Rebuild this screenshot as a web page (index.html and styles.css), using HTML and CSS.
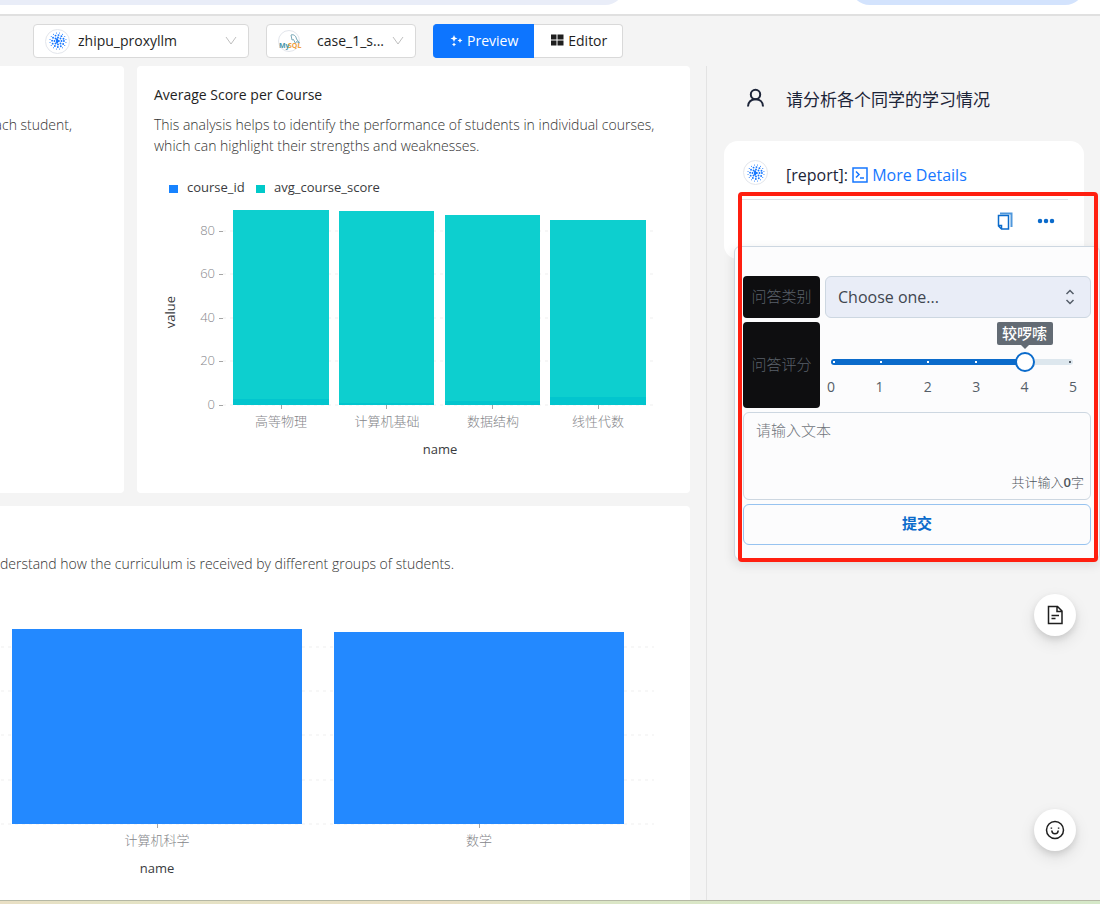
FILE: index.html
```html
<!DOCTYPE html>
<html lang="en">
<head>
<meta charset="utf-8">
<title>Report</title>
<link rel="stylesheet" href="styles.css">
</head>
<body>
<svg class="symbols" aria-hidden="true">
  <symbol id="dots" viewBox="0 0 20 20">
    <g fill="none" stroke="#1677ff" stroke-linecap="round">
      <path d="M9 8.200v3.600M10.800 10h.1" stroke-width="2.400"/>
      <circle cx="10" cy="10" r="3.900" stroke-width="2.100" pathLength="8" stroke-dasharray="0 1"/>
      <circle cx="10" cy="10" r="6.600" stroke-width="2.100" pathLength="12" stroke-dasharray="0 1"/>
      <circle cx="10" cy="10" r="9" stroke-width="1.200" pathLength="16" stroke-dasharray="0 1" stroke-dashoffset="0.500"/>
    </g>
  </symbol>
</svg>
<div class="tabs"><span class="tab tab-wide"></span><span class="tab tab-active"></span></div>
<main class="app">
  <header class="toolbar">
    <div class="picker picker-model">
      <span class="avatar"><svg width="18" height="18"><use href="#dots"/></svg></span>
      <select aria-label="Model"><option>zhipu_proxyllm</option></select>
      <svg class="chevron" viewBox="0 0 12 12"><path d="M1 2l5 7 5-7"/></svg>
    </div>
    <div class="picker picker-db">
      <span class="avatar avatar-db"><svg width="22" height="22" viewBox="0 0 22 22">
        <path d="M12 4c3-1 5 1 5.500 4l3 4-3-1.500-1 2-2-4-1.500.5z" fill="none" stroke="#79a9b8" stroke-width="1"/>
        <text x="0" y="17" class="logo-my">My</text><text x="9" y="17" class="logo-sql">SQL</text></svg></span>
      <select aria-label="Database"><option>case_1_s...</option></select>
      <svg class="chevron" viewBox="0 0 12 12"><path d="M1 2l5 7 5-7"/></svg>
    </div>
    <div class="modes">
      <button class="mode mode-on"><svg width="14" height="14" viewBox="0 0 14 14" fill="#fff"><path d="M5 2l1 2.500L8.500 5.500 6 6.500 5 9 4 6.500 1.500 5.500 4 4.500zM11 5l.8 1.700 1.700.8-1.700.8L11 10l-.8-1.700-1.700-.8 1.700-.8zM5 9.500l.7 1.300 1.300.7-1.300.7L5 13.500l-.7-1.300-1.300-.7 1.300-.7z"/></svg>Preview</button>
      <button class="mode"><svg width="14" height="14" viewBox="0 0 14 14" fill="#1f1f1f"><path d="M1 1.500h5.500v5H1zM7.500 1.500H13.500v5H7.500zM1 7.500h5.500v5H1zM7.500 7.500H13.500v5H7.500z"/></svg>Editor</button>
    </div>
  </header>
  <div class="columns">
    <section class="board">
      <article class="card card-cut"><p class="note note-end">ach student,</p></article>
      <article class="card card-score">
        <h2 class="title">Average Score per Course</h2>
        <p class="note">This analysis helps to identify the performance of students in individual courses, which can highlight their strengths and weaknesses.</p>
        <svg class="chart" viewBox="0 0 553 323" role="img" aria-label="Average score per course">
          <rect x="32" y="15" width="9" height="8" fill="#1783ff"/><text class="key" x="50" y="22">course_id</text>
          <rect x="119" y="15" width="9" height="8" fill="#00c9c9"/><text class="key" x="137" y="22">avg_course_score</text>
          <path class="grid" d="M86 61H519M86 104H519M86 148H519M86 191H519M86 235H519"/>
          <path class="tick" d="M82 61.500h4M82 104.500h4M82 148.500h4M82 191.500h4M82 235.500h4"/>
          <g fill="#0dcfcf"><rect x="96" y="40" width="96" height="195"/><rect x="202" y="41" width="95" height="194"/><rect x="308" y="45" width="95" height="190"/><rect x="413" y="50" width="96" height="185"/></g>
          <g fill="#02c5ce"><rect x="96" y="229" width="96" height="6"/><rect x="202" y="233" width="95" height="2"/><rect x="308" y="231" width="95" height="4"/><rect x="413" y="227" width="96" height="8"/></g>
          <path class="tick" d="M144.500 235v4M249.500 235v4M355.500 235v4M461.500 235v4"/>
          <g class="axis end"><text x="78" y="65">80</text><text x="78" y="108">60</text><text x="78" y="152">40</text><text x="78" y="195">20</text><text x="78" y="239">0</text></g>
          <g class="axis mid"><text x="144" y="256">高等物理</text><text x="250" y="256">计算机基础</text><text x="356" y="256">数据结构</text><text x="461" y="256">线性代数</text></g>
          <text class="key mid" x="303" y="284">name</text>
          <text class="key mid" transform="translate(38 142) rotate(-90)">value</text>
        </svg>
      </article>
      <article class="card card-major">
        <p class="note">derstand how the curriculum is received by different groups of students.</p>
        <svg class="chart" viewBox="0 0 690 320" role="img" aria-label="Score per major">
          <path class="grid" d="M1 67H654M1 111H654M1 155H654M1 200H654M1 244H654"/>
          <g fill="#2389ff"><rect x="12" y="49" width="290" height="195"/><rect x="334" y="52" width="290" height="192"/></g>
          <path class="tick" d="M157.500 244v4M479.500 244v4"/>
          <g class="axis mid"><text x="157" y="265">计算机科学</text><text x="479" y="265">数学</text></g>
          <text class="key mid" x="157" y="293">name</text>
        </svg>
      </article>
    </section>
    <aside class="chat">
      <div class="message question">
        <svg class="user" viewBox="0 0 20 20"><circle cx="10" cy="6.500" r="4.700"/><path d="M2.500 18.500c0-4.500 3-7.300 7.500-7.300s7.500 2.800 7.500 7.300"/></svg>
        <p>请分析各个同学的学习情况</p>
      </div>
      <div class="reply">
        <div class="message">
          <span class="avatar"><svg width="18" height="18"><use href="#dots"/></svg></span>
          <p>[report]: <a href="#details"><svg width="16" height="16" viewBox="0 0 16 16"><path d="M1 1h14v14H1zM4 4.500l3 3-3 3M8 11h4"/></svg> More Details</a></p>
        </div>
        <div class="actions">
          <button class="action" aria-label="Copy"><svg width="18" height="18" viewBox="0 0 18 18"><path d="M4 1.500h11.500V15" stroke="#4f97dc" stroke-width="2"/><path d="M2.500 3.500h10V17H5.500l-3-3zM2.500 13.500h3V17"/></svg></button>
          <button class="action" aria-label="More"><svg width="18" height="18" viewBox="0 0 18 18"><path d="M3 9h.01M9 9h.01M15 9h.01" stroke-width="4.500" stroke-linecap="round"/></svg></button>
        </div>
        <form class="feedback">
          <label class="tag" for="kind">问答类别</label>
          <div class="kind">
            <select id="kind"><option>Choose one...</option></select>
            <svg width="12" height="18" viewBox="0 0 12 18"><path d="M2.500 6L6 2.500 9.500 6M2.500 12L6 15.500 9.500 12"/></svg>
          </div>
          <label class="tag tag-tall" for="score">问答评分</label>
          <div class="score">
            <div class="slider">
              <div class="rail"><i></i><i></i><i></i><i></i><i></i><i></i><output class="tip" for="score">较啰嗦</output></div>
              <input id="score" type="range" min="0" max="5" value="4">
            </div>
            <div class="marks"><span>0</span><span>1</span><span>2</span><span>3</span><span>4</span><span>5</span></div>
          </div>
          <div class="comment">
            <textarea aria-label="请输入文本" placeholder="请输入文本"></textarea>
            <span class="count">共计输入<b>0</b>字</span>
          </div>
          <button class="send" type="button">提交</button>
        </form>
        <div class="highlight"></div>
      </div>
    </aside>
  </div>
  <button class="fab fab-doc" aria-label="Document"><svg width="20" height="20" viewBox="0 0 20 20"><path d="M3.500 1.500h9l4.500 4.500v12.500H3.500zM12 1.500V6.500h5M6.500 10.500h7.500M6.500 13.500h4"/></svg></button>
  <button class="fab fab-smile" aria-label="Feedback"><svg width="20" height="20" viewBox="0 0 20 20"><circle cx="10" cy="10" r="8.500"/><path d="M6.800 10.500c.2 4.300 6.200 4.300 6.400 0M6.400 7.500v1.200M13.600 7.500v1.200"/></svg></button>
</main>
<div class="dock"></div>
</body>
</html>
```
FILE: styles.css
```css
* { box-sizing: border-box; }
body {
  margin: 0;
  min-height: 100vh;
  display: flex;
  flex-direction: column;
  overflow-x: hidden;
  background: #f4f4f4;
  font: 14px/21px "Open Sans", "Noto Sans CJK SC", sans-serif;
  color: #1f1f1f;
}
h2, p { margin: 0; font-weight: 400; }
button, select, textarea, input { margin: 0; font: inherit; color: inherit; }
button { cursor: pointer; }
.symbols { position: absolute; width: 0; height: 0; }

.tabs {
  display: flex;
  justify-content: space-between;
  height: 16px;
  padding-right: 15px;
  overflow: hidden;
  background: #fff;
  border-bottom: 2px solid #e0e0e0;
}
.tab { height: 40px; margin-top: -35px; border-radius: 20px; }
.tab-wide { width: 625px; border-radius: 0 20px 20px 0; background: #e9edf8; }
.tab-active { width: 235px; background: #d3e3fd; }

.app { position: relative; flex: 1; display: flex; flex-direction: column; }
.toolbar { display: flex; gap: 17px; padding: 8px 33px; height: 50px; }
.picker {
  display: flex;
  align-items: center;
  gap: 8px;
  padding: 0 11px;
  background: #fff;
  border: 1px solid #d9d9d9;
  border-radius: 4px;
}
.picker-model { width: 216px; }
.picker-db { width: 150px; gap: 17px; }
.picker select {
  flex: 1;
  min-width: 0;
  padding: 0 0 2px;
  appearance: none;
  border: 0;
  background: none;
}
.picker-db .chevron { margin-left: -10px; }
.chevron { width: 12px; height: 12px; fill: none; stroke: #bfbfbf; }
.avatar {
  flex: none;
  display: grid;
  place-items: center;
  width: 25px;
  height: 25px;
  border: 1px solid #e3e6ec;
  border-radius: 50%;
  background: #fff;
}
.avatar-db { width: 22px; height: 22px; }
.avatar-db svg { overflow: visible; }
.logo-my, .logo-sql { font: 700 7px "Open Sans", sans-serif; fill: #4794a8; }
.logo-sql { fill: #f0a040; }
.modes { display: flex; }
.mode {
  display: flex;
  align-items: center;
  gap: 4px;
  padding: 0 15px 2px 16px;
  background: #fff;
  border: 1px solid #d9d9d9;
  border-left: 0;
  border-radius: 0 4px 4px 0;
}
.mode-on { background: #0d75ff; border-color: #0d75ff; border-radius: 4px 0 0 4px; color: #fff; }

.columns { flex: 1; display: flex; gap: 16px; }
.board {
  flex: 1;
  display: grid;
  grid-template-columns: 124fr 553fr;
  grid-template-rows: auto 1fr;
  gap: 13px;
}
.card { background: #fff; border-radius: 4px; min-width: 0; }
.card-cut { padding-top: 48px; border-radius: 0 4px 4px 0; }
.card-score { padding-top: 18px; }
.card-score .title, .card-score .note { padding: 0 8px 0 17px; }
.card-score .note { margin-top: 9px; margin-bottom: 14px; }
.card-major { grid-column: 1 / 3; padding-top: 47px; border-radius: 0 4px 0 0; }
.card-major .chart { margin-top: 6px; }
.title { font-size: 14px; line-height: 21px; }
.note { color: #333; font-weight: 300; }
.note-end { display: flex; justify-content: flex-end; padding-right: 52px; white-space: nowrap; }
.chart { display: block; width: 100%; height: auto; }
.chart .grid { fill: none; stroke: #efefef; stroke-dasharray: 3 4; }
.chart .tick { fill: none; stroke: #a6a6a6; }
.chart .key { font-size: 13px; fill: #3a3b40; }
.chart .axis { font-size: 13px; font-weight: 300; fill: #85868a; }
.chart .mid { text-anchor: middle; }
.chart .end { text-anchor: end; }

.chat { width: 394px; padding: 18px 16px 0 17px; border-left: 1px solid #e3e3e3; }
.message { display: flex; gap: 18px; padding: 0 19px; font-size: 16px; line-height: 32px; color: #1c2438; }
.question { font-size: 17px; font-weight: 300; }
.user { flex: none; width: 25px; height: 20px; margin-top: 4px; fill: none; stroke: #1c2438; stroke-width: 2; }
.message .avatar { margin-top: 1px; }
.message a { color: #1677ff; text-decoration: none; }
.message a svg { vertical-align: -2px; fill: none; stroke: #1677ff; stroke-width: 1.500; }
.reply {
  position: relative;
  height: 118px;
  margin-top: 25px;
  padding-top: 18px;
  background: #fff;
  border-radius: 14px;
}
.actions {
  display: flex;
  justify-content: flex-end;
  gap: 23px;
  margin: 8px 16px 0;
  padding: 12px 13px;
  border-top: 1px solid #dfe3e8;
}
.action { display: grid; padding: 0; border: 0; background: none; }
.action svg { fill: none; stroke: #0b6bcb; stroke-width: 1.500; }

.feedback {
  position: absolute;
  top: 105px;
  left: 10px;
  right: -16px;
  display: grid;
  grid-template-columns: 77px 1fr;
  gap: 4px 5px;
  padding: 29px 8px 14px;
  background: #fcfcfd;
  border: 1px solid #cdd7e1;
  border-radius: 6px;
  box-shadow: 0 4px 12px rgba(21, 21, 21, .12);
  font-size: 15px;
}
.tag {
  display: grid;
  place-items: center;
  min-height: 42px;
  padding-bottom: 2px;
  border-radius: 4px;
  background: #0e0e10;
  color: #5a616a;
  font-weight: 300;
}
.tag-tall { min-height: 86px; }
.kind {
  display: flex;
  align-items: center;
  padding: 0 14px 0 12px;
  background: #e9edf7;
  border: 1px solid #cdd7e1;
  border-radius: 6px;
}
.kind select { flex: 1; padding: 0; appearance: none; border: 0; background: none; font-size: 16px; color: #3f4650; }
.kind svg { fill: none; stroke: #555e68; stroke-width: 1.500; }
.score { padding: 30px 8px 0 0; font-size: 14px; }
.slider { display: grid; align-items: center; margin-left: -4px; }
.slider > * { grid-area: 1 / 1; }
.rail {
  position: relative;
  display: flex;
  align-items: center;
  justify-content: space-between;
  height: 6px;
  margin: 0 10px;
  padding: 0 2px;
  border-radius: 3px;
  background: linear-gradient(to right, #0b6bcb 80%, #dde7ee 80%);
}
.rail i { width: 2px; height: 2px; background: #fff; }
.rail i:nth-child(6) { background: #555e68; }
.tip {
  position: absolute;
  left: 80%;
  bottom: 20px;
  width: 56px;
  margin-left: -28px;
  border-radius: 2px;
  background: #636b74;
  color: #fff;
  font-size: 15px;
  font-weight: 500;
  line-height: 23px;
  text-align: center;
  white-space: nowrap;
}
.tip::after {
  content: "";
  position: absolute;
  top: 100%;
  left: 24px;
  border: 4px solid transparent;
  border-top-color: #636b74;
}
.slider input { z-index: 1; width: 100%; height: 20px; appearance: none; background: none; }
.slider input::-webkit-slider-thumb {
  width: 20px;
  height: 20px;
  appearance: none;
  border: 2px solid #0b6bcb;
  border-radius: 50%;
  background: #fff;
}
.marks { display: flex; justify-content: space-between; margin-top: 4px; padding-right: 4px; color: #555e68; }
.marks span { width: 12px; text-align: center; }
.comment {
  grid-column: 1 / 3;
  display: flex;
  flex-direction: column;
  height: 88px;
  padding: 7px 6px 6px 12px;
  border: 1px solid #cdd7e1;
  border-radius: 6px;
}
.comment textarea { flex: 1; padding: 0; border: 0; outline: 0; resize: none; background: none; font-weight: 300; }
.comment textarea::placeholder { color: #70757c; }
.count { align-self: flex-end; font-size: 13px; color: #50565e; font-weight: 300; }
.count b { font-weight: 600; }
.send {
  grid-column: 1 / 3;
  height: 41px;
  padding: 0 0 2px;
  border: 1px solid #97c3f0;
  border-radius: 6px;
  background: #fcfcfd;
  color: #0b6bcb;
  font-weight: 600;
}
.highlight {
  position: absolute;
  top: 51px;
  left: 14px;
  right: -14px;
  height: 370px;
  border: 4px solid #ff1f10;
  border-radius: 4px;
  pointer-events: none;
}
.fab {
  position: absolute;
  right: 24px;
  display: grid;
  place-items: center;
  width: 42px;
  height: 42px;
  padding: 0;
  border: 0;
  border-radius: 50%;
  background: #fff;
  box-shadow: 0 6px 16px rgba(0, 0, 0, .1), 0 3px 6px rgba(0, 0, 0, .1);
}
.fab svg { fill: none; stroke: #1f1f1f; stroke-width: 1.500; }
.fab-doc { bottom: 264px; }
.fab-smile { bottom: 49px; }
.dock { height: 4px; border-top: 1px solid #b5b8a5; background: linear-gradient(to right, #e9dfc4, #e4e3c5 10%, #eadfc4 40%, #dbe6c6 55%, #d5e8c8); }
```
